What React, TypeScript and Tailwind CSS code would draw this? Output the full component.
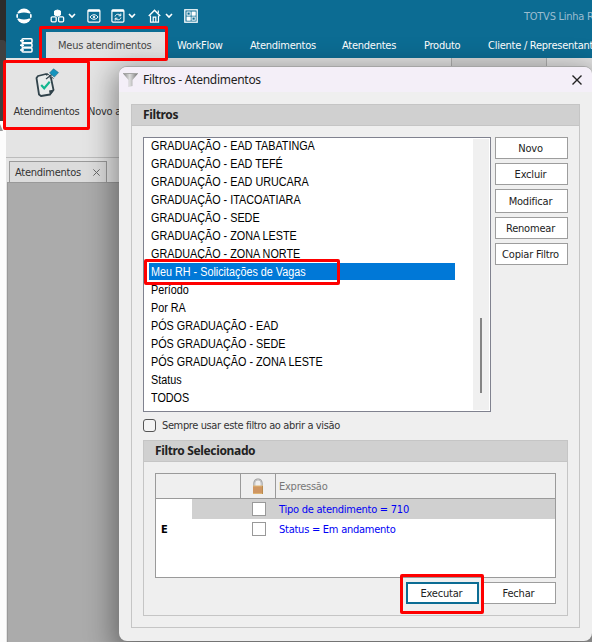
import type { ReactNode } from "react";

const filters = [
  "GRADUAÇÃO - EAD TABATINGA",
  "GRADUAÇÃO - EAD TEFÉ",
  "GRADUAÇÃO - EAD URUCARA",
  "GRADUAÇÃO - ITACOATIARA",
  "GRADUAÇÃO - SEDE",
  "GRADUAÇÃO - ZONA LESTE",
  "GRADUAÇÃO - ZONA NORTE",
  "Meu RH - Solicitações de Vagas",
  "Período",
  "Por RA",
  "PÓS GRADUAÇÃO - EAD",
  "PÓS GRADUAÇÃO - SEDE",
  "PÓS GRADUAÇÃO - ZONA LESTE",
  "Status",
  "TODOS",
];

const selectedFilter = "Meu RH - Solicitações de Vagas";

const menu = [
  { label: "WorkFlow", width: "w-[73px]" },
  { label: "Atendimentos", width: "w-[92px]" },
  { label: "Atendentes", width: "w-[82px]" },
  { label: "Produto", width: "w-[64px]" },
  { label: "Cliente / Representante", width: "w-[140px]" },
];

const Chevron = ({ className = "" }: { className?: string }) => (
  <svg width="8" height="6" viewBox="0 0 8 6" fill="none" stroke="#fff" strokeWidth="1.6" className={`shrink-0 ${className}`}>
    <path d="M1 1l3 3 3-3" />
  </svg>
);

const Logo = () => (
  <svg width="16" height="16" viewBox="0 0 16 16" className="shrink-0">
    <circle cx="8" cy="8" r="7.400" fill="#fff" />
    <path d="M0 4.800c1.500.6 2.600.7 3.600.5 1.200-.5 2.700-.8 4.400-.8s3.200.3 4.400.8c1 .2 2.100.1 3.600-.5v1.300c-.8.300-1.400.4-2 .4.300.5.400 1 .4 1.500s-.1 1-.4 1.500c.6 0 1.200.1 2 .4v1.300c-1.500-.6-2.600-.7-3.600-.5-1.200.5-2.700.8-4.400.8s-3.200-.3-4.400-.8c-1-.2-2.100-.1-3.600.5V9.900c.8-.3 1.400-.4 2-.4-.3-.5-.4-1-.4-1.500s.1-1 .4-1.500c-.6 0-1.200-.1-2-.4z" fill="#0c6c93" />
    <path d="M1.200 6.300v3.400M14.800 6.300v3.400" stroke="#fff" strokeWidth="1.500" />
  </svg>
);

const CubesIcon = () => (
  <svg width="15" height="14" viewBox="0 0 15 14" fill="none" stroke="#fff" className="shrink-0">
    <path d="M4.500 2l3-1 3 1v4l-3 1.200-3-1.200z" fill="#fff" />
    <rect x="1.200" y="7.800" width="5" height="5" rx="1" strokeWidth="1.300" />
    <rect x="8.600" y="7.800" width="5" height="5" rx="1" strokeWidth="1.300" />
  </svg>
);

const WindowIcon = ({ children, className = "" }: { children: ReactNode; className?: string }) => (
  <svg width="14" height="14" viewBox="0 0 14 14" fill="none" stroke="#fff" className={`shrink-0 ${className}`}>
    <rect x=".9" y=".9" width="12" height="12.200" rx="1" strokeWidth="1.200" />
    <path d="M1 1.800h12" strokeWidth="2" />
    {children}
  </svg>
);

const HomeIcon = () => (
  <svg width="13" height="14" viewBox="0 0 13 14" fill="none" stroke="#fff" strokeWidth="1.200" className="ml-3 shrink-0">
    <path d="M.8 7l5.700-5.800L12.200 7" strokeWidth="1.500" />
    <path d="M2.500 6.500v6.700h8V6.500" />
    <path d="M5.200 13V8.200h2.600V13" />
    <path d="M10.300 4V1.500" />
  </svg>
);

const GridIcon = () => (
  <svg width="14" height="14" viewBox="0 0 14 14" fill="none" stroke="#fff" className="ml-[11px] shrink-0">
    <rect x=".8" y=".8" width="12.400" height="12.400" strokeWidth="1.300" />
    <rect x="3" y="3" width="3.200" height="3.200" />
    <rect x="8" y="3" width="3.200" height="3.200" fill="#fff" />
    <rect x="3" y="8" width="3.200" height="3.200" fill="#fff" />
    <rect x="8" y="8" width="3.200" height="3.200" />
  </svg>
);

const ServerIcon = () => (
  <svg width="13" height="15" viewBox="0 0 13 15" fill="none" stroke="#fff" strokeWidth="1.500" className="shrink-0">
    <rect x="2" y=".8" width="10" height="3.900" rx="1" />
    <rect x="2" y="5.400" width="10" height="3.900" rx="1" />
    <rect x="2" y="10" width="10" height="3.900" rx="1" />
    <path d="M0 2.700h4M0 7.300h4M0 11.900h4" />
  </svg>
);

const TaskIcon = () => (
  <svg width="26" height="30" viewBox="0 0 26 30" fill="none" className="shrink-0">
    <path d="M4 8l8-2 5 4 2.500 12-3.500 4.500-9 1.500-2-1.500L2.500 10z" fill="#e9ecec" stroke="#31434b" strokeWidth="1.800" strokeLinejoin="round" />
    <path d="M20.300 21.500l-5.300 1 1 5z" fill="#31434b" />
    <path d="M12 10.500l6-5" stroke="#e9ecec" strokeWidth="3" />
    <path d="M12 11l6.500-5" stroke="#31434b" strokeWidth="1.200" />
    <path d="M13 5.500l6.500 5" stroke="#31434b" strokeWidth="1" />
    <path d="M19.500.8l5 3.800-4.200 4.500-4.800-4.100z" fill="#1594bd" stroke="#246b83" strokeWidth=".6" />
    <path d="M7.200 17l3 3.300 5.500-6.500" stroke="#12b78f" strokeWidth="2.100" />
  </svg>
);

const FunnelIcon = () => (
  <svg width="17" height="16" viewBox="0 0 17 16" className="shrink-0">
    <defs>
      <linearGradient id="funnel">
        <stop offset="0" stopColor="#858585" />
        <stop offset=".45" stopColor="#dedede" />
        <stop offset="1" stopColor="#707070" />
      </linearGradient>
    </defs>
    <path d="M1 1.500h15L10.500 8v6l-4 1V8z" fill="url(#funnel)" />
    <path d="M1 1.500h15" stroke="#a5a5a5" />
  </svg>
);

const LockIcon = () => (
  <svg width="12" height="17" viewBox="0 0 12 17" className="shrink-0">
    <path d="M2.300 9V5a3.700 3.700 0 017.400 0v4" fill="none" stroke="#949494" strokeWidth="1.800" />
    <path d="M2.500 8V5a3.500 3.500 0 017 0v3" fill="none" stroke="#ddd" strokeWidth=".7" />
    <rect x="1" y="8" width="10" height="8" fill="#cf9662" />
    <path d="M1 8h10M1 15.500h10" stroke="#dfb574" />
    <path d="M10.500 8v8" stroke="#b98b4d" />
  </svg>
);

const Cross = ({ size, color }: { size: number; color: string }) => (
  <svg width={size} height={size} viewBox="0 0 10 10" fill="none" stroke={color} strokeWidth="1.400" className="shrink-0">
    <path d="M.5.5l9 9M9.500.5l-9 9" />
  </svg>
);

const Button = ({ children, className = "h-[22px]" }: { children: ReactNode; className?: string }) => (
  <button className={`flex w-[73px] shrink-0 items-center justify-center border border-[#9d9d9d] bg-white pr-0.5 tracking-[-0.2px] text-[#222] ${className}`}>
    {children}
  </button>
);

const GroupTitle = ({ children }: { children: ReactNode }) => (
  <h2 className="flex h-[21px] items-center border-b border-[#c5c5c5] bg-[#d0d0d0] pl-[11px] font-['Noto_Sans',sans-serif] text-[12px] leading-4 font-bold tracking-[-0.35px] text-[#222]">
    {children}
  </h2>
);

const Highlight = ({ className }: { className: string }) => (
  <div className={`pointer-events-none absolute z-20 rounded-[2px] border-3 border-[#fe0000] ${className}`} />
);

const Header = () => (
  <header className="h-[58px] bg-[#0c6c93] text-white">
    <div className="flex h-8 items-center pl-[10px]">
      <Logo />
      <div className="mr-[9px] ml-[9px] h-[21px] w-px bg-[#8ab8ca]" />
      <CubesIcon />
      <Chevron className="ml-[3px]" />
      <WindowIcon className="ml-[11px]">
        <path d="M3 8c2-3 6-3 8 0-2 3-6 3-8 0z" />
        <circle cx="7" cy="8" r=".8" fill="#fff" />
      </WindowIcon>
      <WindowIcon className="ml-[10px]">
        <path d="M4 7.500C4.500 5 8 4.500 9.500 6.500M10 8.500C9.500 11 6 11.500 4.500 9.500" />
        <path d="M9.800 4.500v2.300H7.500M4.200 11.500V9.200h2.300" />
      </WindowIcon>
      <Chevron className="ml-[3px]" />
      <HomeIcon />
      <Chevron className="ml-1" />
      <GridIcon />
      <span className="ml-[326px] whitespace-nowrap text-[#9bbdd0]">TOTVS Linha RM</span>
    </div>
    <nav className="flex h-[26px] items-center pl-[14px] whitespace-nowrap">
      <ServerIcon />
      <div className="mr-3 ml-[13px] flex h-full w-[119px] shrink-0 items-center bg-gradient-to-br from-[#dedede] to-[#e5e5e5] pl-3 text-[#474747]">
        Meus atendimentos
      </div>
      {menu.map((item) => (
        <span key={item.label} className={`shrink-0 ${item.width}`}>
          {item.label}
        </span>
      ))}
    </nav>
  </header>
);

const Ribbon = () => (
  <div className="flex h-[100px] border-b border-[#bcbcbc] bg-[#e4e4e4] text-[#333]">
    <div className="flex w-20 flex-col items-center pt-[10px] pl-px">
      <TaskIcon />
      <span className="mt-[5px]">Atendimentos</span>
    </div>
    <span className="w-[33px] overflow-hidden pt-[45px] pl-0.5 whitespace-nowrap">Novo atendimento</span>
    <div className="ml-[332px] h-full w-[96px] border-x border-[#b0b0b0] bg-[#d8d8d8]" />
  </div>
);

const FilterList = () => (
  <div className="flex h-[275px] w-[348px] justify-between overflow-hidden border border-[#80828f] bg-white pr-px">
    <ul className="-mt-px pl-[5px] font-['Liberation_Sans',sans-serif] text-[12px] leading-[18px] tracking-normal text-black">
      {filters.map((name) => (
        <li
          key={name}
          className={
            name === selectedFilter
              ? "mb-px h-[17px] w-[306px] bg-[#0078d7] pl-0.5 text-white"
              : "h-[18px] pl-0.5"
          }
        >
          <span className="block w-max origin-left scale-x-90">{name}</span>
        </li>
      ))}
    </ul>
    <div className="my-px flex w-4 justify-center bg-[#f0f0f0] pt-[179px]">
      <div className="h-[75px] w-0.5 bg-[#858585]" />
    </div>
  </div>
);

const ExpressionTable = () => (
  <div className="h-[105px] w-[401px] border border-[#9a9a9a] bg-white text-[#0000f5]">
    <div className="flex h-[25px] border-b border-[#9a9a9a] bg-[#efefef]">
      <div className="w-[85px] border-r border-[#9a9a9a]" />
      <div className="flex w-[35px] items-center justify-center border-r border-[#9a9a9a]">
        <LockIcon />
      </div>
      <span className="flex items-center pl-[3px] text-[#777]">Expressão</span>
    </div>
    <div className="flex h-5 items-center">
      <div className="w-9" />
      <div className="flex h-full flex-1 items-center bg-[#d0d0d0] pl-[60px]">
        <div className="size-[14px] border border-[#999] bg-white" />
        <span className="ml-[13px]">Tipo de atendimento = 710</span>
      </div>
    </div>
    <div className="flex h-5 items-center">
      <b className="w-24 pl-[5px] text-black">E</b>
      <div className="size-[14px] border border-[#999] bg-white" />
      <span className="ml-[13px]">Status = Em andamento</span>
    </div>
  </div>
);

const FilterDialog = () => (
  <div className="absolute top-[66px] left-[119px] z-10 h-[575px] w-[473px] overflow-hidden rounded-lg border-t border-[#a5a5a5] bg-[#efefef] shadow-[0_8px_28px_6px_rgba(0,0,0,0.38)]">
    <div className="flex h-[25px] items-center bg-[#f4eff8] pr-[10px] pl-[3px]">
      <FunnelIcon />
      <h1 className="ml-1 flex-1 font-['Noto_Sans',sans-serif] text-[12px] leading-4 tracking-[-0.28px] text-[#222]">Filtros - Atendimentos</h1>
      <Cross size={10} color="#222" />
    </div>
    <section className="mt-3 ml-3 h-[524px] w-[449px] border border-[#c5c5c5]">
      <GroupTitle>Filtros</GroupTitle>
      <div className="flex gap-1 pt-[11px] pl-[11px]">
        <FilterList />
        <div className="flex flex-col gap-1">
          <Button>Novo</Button>
          <Button>Excluir</Button>
          <Button className="h-6">Modificar</Button>
          <Button>Renomear</Button>
          <Button>Copiar Filtro</Button>
        </div>
      </div>
      <label className="mt-[7px] ml-[11px] flex h-[13px] items-center gap-1.5 text-[#333]">
        <span className="size-[13px] rounded-[3px] border border-[#555] bg-[#f4f4f4]" />
        <span className="tracking-[-0.38px]">Sempre usar este filtro ao abrir a visão</span>
      </label>
      <section className="mt-2 ml-[11px] h-[176px] w-[425px] border border-[#c5c5c5]">
        <GroupTitle>Filtro Selecionado</GroupTitle>
        <div className="pt-[11px] pl-[11px]">
          <ExpressionTable />
          <div className="mt-1 flex w-[401px] justify-end gap-1">
            <Button className="h-[22px] outline-2 -outline-offset-2 outline-[#0c6c93]">Executar</Button>
            <Button>Fechar</Button>
          </div>
        </div>
      </section>
    </section>
  </div>
);

export default function App() {
  return (
    <div className="relative flex h-[642px] w-[592px] overflow-hidden bg-[#e4e4e4] font-['DejaVu_Sans_Condensed','DejaVu_Sans',sans-serif] text-[11px] leading-[17px] tracking-[-0.25px]">
      <div className="flex w-1.5 shrink-0 flex-col bg-[#fcfcfc]">
        <div className="h-[121px] bg-[#2c2c2c] pt-10">
          <div className="h-[81px] rounded-tr bg-[#404040]" />
        </div>
        <svg width="6" height="12" viewBox="0 0 6 12">
          <path d="M0 3l3 7H0z" fill="#999" />
        </svg>
      </div>
      <div className="flex min-w-0 flex-1 flex-col">
        <Header />
        <Ribbon />
        <div className="flex h-6 items-end pl-[3px]">
          <div className="flex h-[21px] w-[98px] items-center justify-between border border-b-0 border-[#999] bg-[#dcdcdc] pr-[6px] pl-[5px] text-[#333]">
            Atendimentos
            <Cross size={7} color="#666" />
          </div>
        </div>
        <div className="ml-px flex-1 border-t border-l border-[#999] bg-[#ababab]" />
      </div>
      <FilterDialog />
      <Highlight className="top-[26px] left-[39px] h-[35px] w-[129px]" />
      <Highlight className="top-[60px] left-[3px] h-[70px] w-[87px]" />
      <Highlight className="top-[259px] left-[144px] h-[26px] w-[196px]" />
      <Highlight className="top-[574px] left-[400px] h-10 w-[84px]" />
    </div>
  );
}
